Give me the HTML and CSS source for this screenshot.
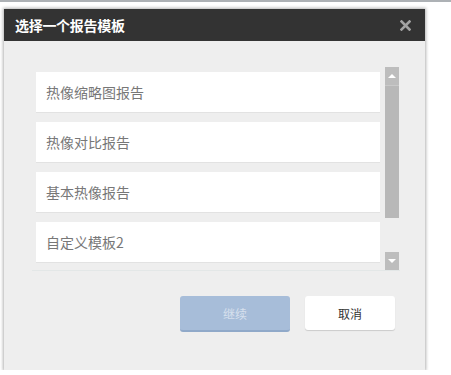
FILE: index.html
```
<!DOCTYPE html>
<html lang="zh">
<head>
<meta charset="utf-8">
<link rel="stylesheet" href="styles.css">
</head>
<body>
<div class="topline"></div>
<div class="dialog">
  <div class="header">
    <span class="title">选择一个报告模板</span>
    <svg class="close" width="11" height="11" viewBox="0 0 11 11"><path d="M1.5 1.5 L9.5 9.5 M9.5 1.5 L1.5 9.5" stroke="#a3a3a3" stroke-width="2.6" stroke-linecap="square"/></svg>
  </div>
  <div class="content">
    <div class="list">
      <div class="items">
        <div class="item">热像缩略图报告</div>
        <div class="item">热像对比报告</div>
        <div class="item">基本热像报告</div>
        <div class="item">自定义模板2</div>
      </div>
      <div class="scrollbar">
        <div class="sb-btn up"><span class="tri-up"></span></div>
        <div class="sb-thumb"></div>
        <div class="sb-space"></div>
        <div class="sb-btn down"><span class="tri-down"></span></div>
      </div>
    </div>
    <div class="actions">
      <button class="btn primary">继续</button>
      <button class="btn cancel">取消</button>
    </div>
  </div>
</div>
</body>
</html>
```
FILE: styles.css
```
html, body {
  margin: 0;
  padding: 0;
  background: #fff;
  font-family: "Noto Sans CJK SC", "Liberation Sans", sans-serif;
}
.topline {
  height: 2px;
  background: #adb1b5;
}
.dialog {
  margin: 7px 0 0 4px;
  width: 421px;
  height: 361px;
  background: #eeeeee;
  box-shadow: 0 0 3px 1px rgba(0,0,0,0.3);
  display: flex;
  flex-direction: column;
}
.header {
  height: 32px;
  background: #333333;
  display: flex;
  align-items: center;
  justify-content: space-between;
  padding: 0 14px 0 11px;
  flex-shrink: 0;
}
.title {
  color: #fff;
  font-size: 14px;
  font-weight: bold;
  letter-spacing: -0.3px;
}
.close {
  display: block;
}
.content {
  padding: 26px 25px 0 28px;
}
.list {
  height: 203px;
  display: flex;
  border-bottom: 1px solid #e3e7e7;
}
.items {
  flex: 1;
  overflow: hidden;
  padding: 5px 5px 0 4px;
}
.item {
  height: 40px;
  background: #fff;
  margin-bottom: 10px;
  box-shadow: 0 1px 0 #e2e2e2;
  display: flex;
  align-items: center;
  padding-left: 10px;
  font-size: 14px;
  color: #777;
}
.scrollbar {
  width: 14px;
  margin-right: 1px;
  display: flex;
  flex-direction: column;
}
.sb-btn {
  height: 18px;
  background: #bdbdbd;
  display: flex;
  align-items: center;
  justify-content: center;
}
.sb-btn.up {
  border-bottom: 1px solid #c9c9c9;
}
.sb-thumb {
  height: 132px;
  background: #b8b8b8;
}
.sb-space {
  flex: 1;
}
.tri-up {
  width: 0;
  height: 0;
  border-left: 4px solid transparent;
  border-right: 4px solid transparent;
  border-bottom: 4px solid #fff;
}
.tri-down {
  width: 0;
  height: 0;
  border-left: 4px solid transparent;
  border-right: 4px solid transparent;
  border-top: 4px solid #fff;
}
.actions {
  display: flex;
  justify-content: flex-end;
  align-items: flex-start;
  gap: 15px;
  margin-top: 25px;
  padding-right: 5px;
}
.btn {
  font-family: "Noto Sans CJK SC", "Liberation Sans", sans-serif;
  font-size: 12px;
  border: none;
  border-radius: 3px;
  padding: 0;
  margin: 0;
}
.primary {
  width: 110px;
  height: 36px;
  background: #a7bdd9;
  border-bottom: 2px solid #90a9c9;
  color: rgba(255,255,255,0.55);
}
.cancel {
  width: 90px;
  height: 34px;
  background: #fff;
  color: #333;
  box-shadow: 0 1px 1px rgba(0,0,0,0.15);
}
```
